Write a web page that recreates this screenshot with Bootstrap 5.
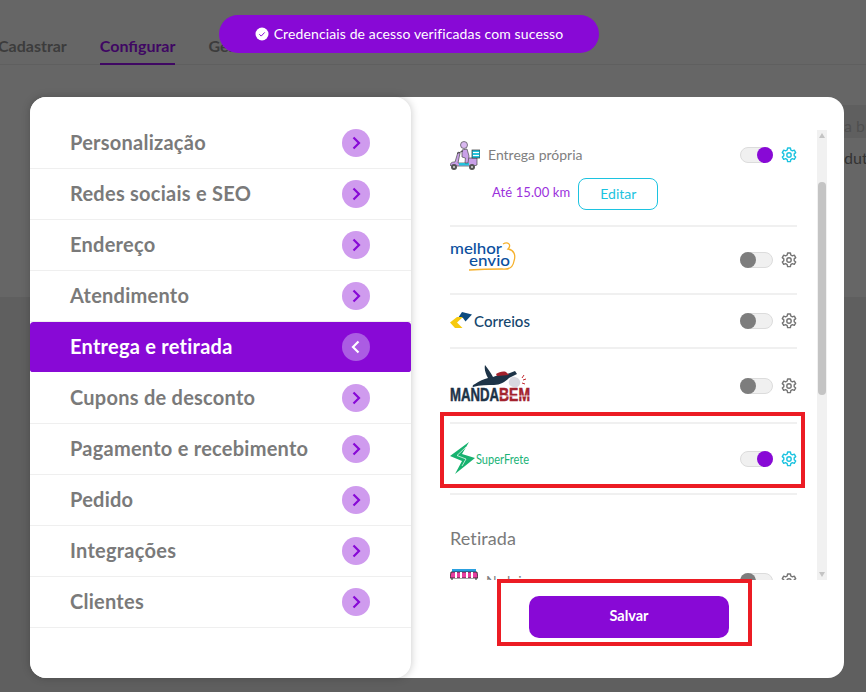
<!DOCTYPE html>
<html lang="pt-BR">
<head>
    <meta charset="UTF-8">
    <meta name="viewport" content="width=device-width, initial-scale=1.0">
    <title>Configurar loja</title>
    <link href="https://cdn.jsdelivr.net/npm/bootstrap@5.3.0/dist/css/bootstrap.min.css" rel="stylesheet">
    <style>
        html, body { height: 100%; }
        body {
            font-family: "Lato", "Liberation Sans", sans-serif;
            background: #666;
            overflow: hidden;
            position: relative;
        }
        .page-tabs {
            height: 65px;
            border-bottom: 1px solid #5f5f5f;
            margin-left: -2px;
            gap: 33px;
            font-size: 16px;
            font-weight: 700;
            color: #3c3c3c;
        }
        .page-tabs span { height: 65px; line-height: 24px; padding-top: 34px; }
        .page-tabs .tab-on { color: #3f0763; border-bottom: 2px solid #3f0763; }
        .page-band { position: absolute; left: 500px; right: 0; top: 105px; height: 33px; background: #5f5f5f; }
        .page-lower { position: absolute; left: 0; right: 0; top: 297px; bottom: 0; background: #5f5f5f; }
        .page-edge { position: absolute; left: 844px; font-size: 16px; white-space: nowrap; }
        .edge-dim { top: 114px; color: #4f4f4f; }
        .edge-dark { top: 146px; color: #333; }
        .status-pill {
            position: absolute; left: 219px; top: 15px; width: 380px; height: 38px; padding-bottom: 1px;
            background: #8809d6; color: #fff; border-radius: 19px; font-size: 14px; letter-spacing: .12px; z-index: 5;
            gap: 5px;
        }
        .settings-box {
            position: absolute; left: 30px; top: 97px; width: 814px; height: 581px;
            background: #fff; border-radius: 16px;
        }
        .side-panel {
            width: 381px; flex: none; height: 581px; padding-top: 21px;
            border-radius: 16px; box-shadow: 0 0 8px rgba(0,0,0,.22); background: #fff;
        }
        .side-row {
            height: 51px; padding: 0 41px 0 40px; font-size: 20px; font-weight: 700; color: #7a7a7a;
            letter-spacing: .25px; border-bottom: 1px solid #efefef;
        }
        .side-name { padding-bottom: 3px; }
        .side-row.row-on {
            background: #8809d6; background-clip: padding-box; color: #fff; border-radius: 3px; border-bottom-color: transparent;
        }
        .chev-dot { width: 28px; height: 28px; border-radius: 50%; background: #cf9bee; flex: none; }
        .row-on .chev-dot { background: #ab5ce3; }
        .ship-area { padding: 33px 0 0 39px; flex: 1; min-width: 0; }
        .ship-scroll { width: 388px; height: 450px; }
        .ship-list { width: 347px; height: 450px; overflow: hidden; }
        .ship-row { border-bottom: 2px solid #f0f0f0; }
        .ship-label { font-size: 14px; color: #808080; padding-bottom: 2px; }
        .switch-track {
            width: 33px; height: 16px; border-radius: 8px; background: #f0f0f0; border: 1px solid #dcdcdc; position: relative; flex: none;
        }
        .switch-knob { position: absolute; top: -1px; width: 16px; height: 16px; border-radius: 50%; background: #7d7d7d; left: -1px; }
        .switch-track.is-on .switch-knob { left: auto; right: -1px; background: #8809d6; }
        .km-row { padding-left: 42px; gap: 8px; margin-top: -2px; }
        .km-text { font-size: 13px; letter-spacing: .1px; color: #9b30dc; padding-bottom: 3px; }
        .edit-btn {
            width: 80px; height: 32px; font-size: 14px; color: #1cc3e0; border: 1px solid #1cc3e0; border-radius: 8px;
            background: #fff; padding: 0 0 2px;
        }
        .group-title { font-size: 18px; color: #7a7a7a; margin-top: 30px; letter-spacing: .1px; }
        .pickup-row { margin-top: 17px; height: 40px; }
        .pickup-row .switch-track, .pickup-row .cog-ico { margin-top: 4px; }
        .pickup-row .ship-label { margin-top: 1px; }
        .bar-track { width: 10px; background: #f1f1f1; margin-left: 20px; position: relative; height: 450px; }
        .bar-thumb { position: absolute; left: 1px; right: 1px; top: 52px; height: 213px; background: #c4c4c4; border-radius: 4px; }
        .bar-up, .bar-down { position: absolute; left: 2px; width: 0; height: 0; border-left: 3px solid transparent; border-right: 3px solid transparent; }
        .bar-up { top: 3px; border-bottom: 5px solid #c4c4c4; }
        .bar-down { bottom: 3px; border-top: 5px solid #c4c4c4; }
        .save-wrap { padding: 16px 0 0 79px; }
        .save-btn {
            width: 200px; height: 42px; background: #8809d6; color: #fff; border: 0; border-radius: 10px;
            font-size: 14.5px; font-weight: 700; padding: 0 0 3px;
        }
        .save-btn:hover { background: #8809d6; color: #fff; }
        .mark-box { position: absolute; border: 4px solid #ec1c24; z-index: 6; pointer-events: none; }
        .mark-one { left: 440px; top: 412px; width: 365px; height: 76px; }
        .mark-two { left: 497px; top: 579px; width: 255px; height: 67px; }
        .logo-text { font-family: "Lato", "Liberation Sans", sans-serif; }
        .logo-heavy { font-family: "Liberation Sans", sans-serif; font-weight: 700; }
    </style>
</head>
<body>
    <div class="page-band"></div>
    <div class="page-lower"></div>
    <div class="page-tabs d-flex">
        <span>Cadastrar</span>
        <span class="tab-on">Configurar</span>
        <span>Gerenciar</span>
    </div>
    <div class="page-edge edge-dim">a bu</div>
    <div class="page-edge edge-dark">duto</div>

    <div class="status-pill d-flex align-items-center justify-content-center">
        <svg width="14" height="14" viewBox="0 0 14 14"><circle cx="7" cy="7" r="6.500" fill="#fff"/><path d="M4.300 7.200l1.900 1.900 3.500-3.700" fill="none" stroke="#8809d6" stroke-width="1"/></svg>
        <span>Credenciais de acesso verificadas com sucesso</span>
    </div>

    <div class="settings-box d-flex">
        <div class="side-panel" id="sideMenu"></div>
        <div class="ship-area d-flex flex-column">
            <div class="ship-scroll d-flex">
                <div class="ship-list">
                    <div class="ship-row" style="height: 97px">
                        <div class="d-flex align-items-center" style="height: 50px">
                            <svg width="30" height="31" viewBox="0 0 30 31">
                                <path d="M0 25c1-3 3-3 5-3l3-10 2 1-2 10h9v-5h10v7l-3 1H1z" fill="#c9a0e8" stroke="#4a4a4a" stroke-width=".7"/>
                                <rect x="9" y="23" width="10" height="2.500" fill="#25c3dc"/>
                                <path d="M12 10l5-1 2 7-1 7h-3l.4-5-3.400-1z" fill="#c9a0e8" stroke="#4a4a4a" stroke-width=".7"/>
                                <path d="M13 11l-6 2.500" stroke="#4a4a4a" stroke-width="1"/>
                                <circle cx="14" cy="5" r="3.500" fill="#d9b8f0" stroke="#4a4a4a" stroke-width=".7"/>
                                <rect x="22" y="10" width="8" height="8" fill="#25c3dc" stroke="#333" stroke-width=".7"/>
                                <path d="M23 12.500h6M23 15.500h6" stroke="#fff" stroke-width="1"/>
                                <circle cx="4" cy="27" r="3" fill="#555"/><circle cx="22" cy="27" r="3" fill="#555"/>
                                <circle cx="4" cy="27" r="1" fill="#ddd"/><circle cx="22" cy="27" r="1" fill="#ddd"/>
                            </svg>
                            <span class="ship-label ms-2">Entrega própria</span>
                            <span class="ms-auto"></span>
                            <span class="switch-track is-on"><span class="switch-knob"></span></span>
                            <svg class="ms-2" width="16" height="16" viewBox="0 0 16 16"><use href="#cog" stroke="#1cc3e0"/></svg>
                        </div>
                        <div class="d-flex align-items-center km-row">
                            <span class="km-text">Até 15.00 km</span>
                            <button class="btn edit-btn">Editar</button>
                        </div>
                    </div>
                    <div class="ship-row d-flex align-items-center" style="height: 68px">
                        <svg class="mb-2" width="66" height="36" viewBox="0 0 66 36">
                            <text class="logo-text" x="0" y="16" font-size="16" font-weight="500" fill="#0b4f9e" textLength="52" lengthAdjust="spacingAndGlyphs">melhor</text>
                            <text class="logo-text" x="19" y="28" font-size="16" font-weight="500" fill="#0b4f9e" textLength="41" lengthAdjust="spacingAndGlyphs">envio</text>
                            <path d="M53 6c5-3 9 1 5 5 6 1 8 6 6 12-1 6-5 9-12 8-8 0-18 0-33 1" fill="none" stroke="#f6b12d" stroke-width="1.300"/>
                        </svg>
                        <span class="ms-auto"></span>
                        <span class="switch-track"><span class="switch-knob"></span></span>
                        <svg class="ms-2" width="16" height="16" viewBox="0 0 16 16"><use href="#cog" stroke="#757575"/></svg>
                    </div>
                    <div class="ship-row d-flex align-items-center" style="height: 54px">
                        <svg width="82" height="20" viewBox="0 0 82 20">
                            <path d="M8 7L12 1l10 2.500-6.500 7L13 7z" fill="#0e4b7f"/>
                            <path d="M0 11.500L7 6h6l-6 5.500 5.500 5.500H5z" fill="#f6c90e"/>
                            <text class="logo-text" x="24" y="16" font-size="16" font-weight="500" fill="#15466d" textLength="56" lengthAdjust="spacingAndGlyphs">Correios</text>
                        </svg>
                        <span class="ms-auto"></span>
                        <span class="switch-track"><span class="switch-knob"></span></span>
                        <svg class="ms-2" width="16" height="16" viewBox="0 0 16 16"><use href="#cog" stroke="#757575"/></svg>
                    </div>
                    <div class="ship-row d-flex align-items-center" style="height: 75px">
                        <svg class="mb-1" width="80" height="38" viewBox="0 0 80 38">
                            <path d="M35 0c3 4 6 8 8 12 4-1 9-4 14-3l8-3 2 3-8 4c-4 4-9 7-15 7-6 0-14 0-21 2-1-1 0-2 2-3 4-3 9-5 13-6-2-4-4-8-3-13z" fill="#1d3347"/>
                            <path d="M46 9c3-2 7-3 10-2l3 3-12 1z" fill="#a3222d"/>
                            <path d="M65 12c4 1 6 4 5 7s-4 4-7 3-5-3-4-6 3-5 6-4z" fill="#d8d8e0"/>
                            <path d="M74 10l-2 3M76 14l-3 1M75 19l-3-1" stroke="#c0272d" stroke-width="1"/>
                            <text class="logo-heavy" x="0" y="36" font-size="18" fill="#1d3347" stroke="#1d3347" stroke-width=".5" textLength="49" lengthAdjust="spacingAndGlyphs">MANDA</text>
                            <text class="logo-heavy" x="49" y="36" font-size="18" fill="#a3222d" stroke="#a3222d" stroke-width=".5" textLength="31" lengthAdjust="spacingAndGlyphs">BEM</text>
                            <path d="M49 31h31" stroke="#fff" stroke-width=".8"/>
                        </svg>
                        <span class="ms-auto"></span>
                        <span class="switch-track"><span class="switch-knob"></span></span>
                        <svg class="ms-2" width="16" height="16" viewBox="0 0 16 16"><use href="#cog" stroke="#757575"/></svg>
                    </div>
                    <div class="ship-row d-flex align-items-center" style="height: 71px">
                        <svg width="80" height="34" viewBox="0 0 80 34">
                            <path d="M19 0L0 14l12 5-7 13 20-16-13-4z" fill="#17b26f"/>
                            <path d="M16 5L7 13.500l9 3.500-4 7" fill="none" stroke="#fff" stroke-width=".7"/>
                            <text class="logo-text" x="26" y="22" font-size="13" fill="#1ab377" textLength="53" lengthAdjust="spacingAndGlyphs">SuperFrete</text>
                        </svg>
                        <span class="ms-auto"></span>
                        <span class="switch-track is-on"><span class="switch-knob"></span></span>
                        <svg class="ms-2" width="16" height="16" viewBox="0 0 16 16"><use href="#cog" stroke="#1cc3e0"/></svg>
                    </div>
                    <div class="group-title">Retirada</div>
                    <div class="pickup-row d-flex align-items-start">
                        <svg width="28" height="14" viewBox="0 0 28 14">
                            <rect x="2" y="0" width="24" height="3" fill="#2aa0e0"/>
                            <path d="M1 3h26l1 6H0z" fill="#e83ea0" stroke="#222" stroke-width=".8"/>
                            <path d="M6 3v6M11 3v6M17 3v6M22 3v6" stroke="#fff" stroke-width="2"/>
                            <path d="M2 9v4M26 9v4M2 13h24" stroke="#222" stroke-width="1"/>
                        </svg>
                        <span class="ship-label ms-2">Na loja</span>
                        <span class="ms-auto"></span>
                        <span class="switch-track"><span class="switch-knob"></span></span>
                        <svg class="ms-2 cog-ico" width="16" height="16" viewBox="0 0 16 16"><use href="#cog" stroke="#757575"/></svg>
                    </div>
                </div>
                <div class="bar-track">
                    <span class="bar-up"></span>
                    <span class="bar-thumb"></span>
                    <span class="bar-down"></span>
                </div>
            </div>
            <div class="d-flex save-wrap">
                <button class="btn save-btn">Salvar</button>
            </div>
        </div>
    </div>

    <div class="mark-box mark-one"></div>
    <div class="mark-box mark-two"></div>

    <svg width="0" height="0" class="position-absolute">
        <defs>
            <g id="cog" fill="none" stroke-width="1.400">
                <circle cx="8" cy="8" r="2.200"/>
                <path d="M6.600 1h2.800l.4 2 1.600.9 1.900-.7 1.400 2.400-1.500 1.300v1.800l1.500 1.300-1.400 2.400-1.900-.7-1.600.9-.4 2H6.600l-.4-2-1.600-.9-1.900.7L1.300 10l1.500-1.300V6.900L1.300 5.600l1.400-2.400 1.900.7 1.600-.9z" stroke-linejoin="round"/>
            </g>
        </defs>
    </svg>

    <script>
        const sideItems = ['Personalização', 'Redes sociais e SEO', 'Endereço', 'Atendimento', 'Entrega e retirada',
            'Cupons de desconto', 'Pagamento e recebimento', 'Pedido', 'Integrações', 'Clientes'];
        const sideMenu = document.getElementById('sideMenu');
        sideItems.forEach(name => {
            const active = name === 'Entrega e retirada';
            const path = active ? 'M12.500 4.500L7 10l5.500 5.500' : 'M7.500 4.500L13 10l-5.500 5.500';
            const stroke = active ? '#fff' : '#8809d6';
            sideMenu.insertAdjacentHTML('beforeend', `
                <div class="side-row d-flex align-items-center justify-content-between${active ? ' row-on' : ''}">
                    <span class="side-name">${name}</span>
                    <span class="chev-dot d-flex align-items-center justify-content-center">
                        <svg width="20" height="20" viewBox="0 0 20 20"><path d="${path}" fill="none" stroke="${stroke}" stroke-width="2.200"/></svg>
                    </span>
                </div>`);
        });
    </script>
</body>
</html>
